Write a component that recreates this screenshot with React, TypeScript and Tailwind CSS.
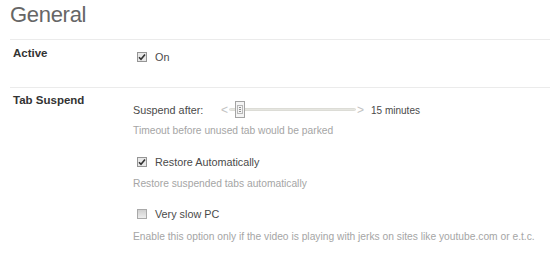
const font = { fontFamily: '"Liberation Sans", Arial, sans-serif' };

type CheckProps = { checked: boolean };

const Check = ({ checked }: CheckProps) => (
  <span
    className={`inline-flex h-[10px] w-[10px] shrink-0 items-center justify-center border ${
      checked
        ? "border-[#959595] bg-[#e8e8e8]"
        : "border-[#a9a9a9] bg-gradient-to-b from-[#cfcfcf] to-[#ededed]"
    }`}
  >
    {checked && (
      <svg width="8" height="8" viewBox="0 0 8 8">
        <path
          d="M1 4.2 L3 6.3 L7 1.4"
          fill="none"
          stroke="#333"
          strokeWidth="1.6"
        />
      </svg>
    )}
  </span>
);

const Slider = () => (
  <div className="flex h-[20px] items-center">
    <span className="mr-[1px] text-[12px] leading-none text-[#c2c2c2]">&lt;</span>
    <div className="relative h-[20px] w-[127px]">
      {/* track */}
      <div className="absolute left-0 right-0 top-[8px] h-[3px] rounded-full border border-[#dcdcd6] bg-[#e6e6e0]" />
      {/* thumb */}
      <div className="absolute left-[6px] top-[1px] flex h-[17px] w-[10px] items-center justify-center border border-[#a3a3a3] bg-[#f4f4f4]">
        <div className="flex h-[9px] w-[6px] flex-col justify-around border border-[#b8b8b8] px-[1px]">
          <span className="h-px bg-[#8f8f8f]" />
          <span className="h-px bg-[#8f8f8f]" />
          <span className="h-px bg-[#8f8f8f]" />
        </div>
      </div>
    </div>
    <span className="ml-[1px] text-[12px] leading-none text-[#c2c2c2]">&gt;</span>
  </div>
);

export default function App() {
  return (
    <div className="h-[261px] w-[550px] overflow-hidden bg-white" style={font}>
      <div className="ml-[10px]">
        <h1 className="h-[40px] border-b border-[#ebebeb] pt-[1px] text-[22px] leading-[28px] tracking-[-0.3px] text-[#666]">
          General
        </h1>

        {/* Active */}
        <div className="flex h-[48px] border-b border-[#ebebeb]">
          <div className="w-[123px] pl-[3px] pt-[6px] text-[11.5px] font-bold leading-[14px] text-[#333]">
            Active
          </div>
          <div className="pt-[10px]">
            <label className="flex h-[14px] items-center text-[10.8px] text-[#4a4a4a]">
              <span className="ml-[4px] mr-[8px] flex">
                <Check checked />
              </span>
              On
            </label>
          </div>
        </div>

        {/* Tab Suspend */}
        <div className="flex">
          <div className="w-[123px] pl-[3px] pt-[5px] text-[11.5px] font-bold leading-[14px] text-[#333]">
            Tab Suspend
          </div>
          <div className="pt-[12px]">
            <div className="flex h-[20px] items-center text-[10.8px] text-[#4a4a4a]">
              <span className="w-[88px]">Suspend after:</span>
              <Slider />
              <span className="ml-[7px] text-[10px]">15 minutes</span>
            </div>
            <p className="mt-[4px] text-[10.25px] leading-[14px] text-[#a5a5a5]">
              Timeout before unused tab would be parked
            </p>

            <label className="mt-[17px] flex h-[14px] items-center text-[10.8px] text-[#4a4a4a]">
              <span className="ml-[4px] mr-[8px] flex">
                <Check checked />
              </span>
              Restore Automatically
            </label>
            <p className="mt-[8px] text-[10.25px] leading-[14px] text-[#a5a5a5]">
              Restore suspended tabs automatically
            </p>

            <label className="mt-[16px] flex h-[14px] items-center text-[10.8px] text-[#4a4a4a]">
              <span className="ml-[4px] mr-[8px] flex">
                <Check checked={false} />
              </span>
              Very slow PC
            </label>
            <p className="mt-[9px] text-[10.25px] leading-[14px] text-[#a5a5a5]">
              Enable this option only if the video is playing with jerks on sites like youtube.com or e.t.c.
            </p>
          </div>
        </div>
      </div>
    </div>
  );
}
